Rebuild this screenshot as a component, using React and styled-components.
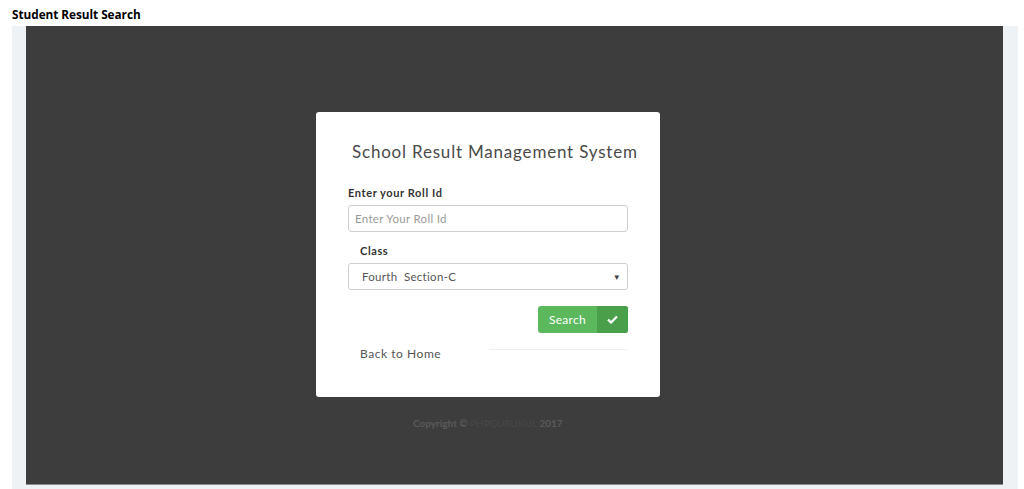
import React from "react";
import styled, { createGlobalStyle } from "styled-components";

const Global = createGlobalStyle`
  html, body {
    margin: 0;
    padding: 0;
    background: #ffffff;
  }
  body {
    font-family: "Open Sans", "Liberation Sans", sans-serif;
  }
`;

const PageTitle = styled.div`
  height: 26px;
  padding-left: 12px;
  box-sizing: border-box;
  padding-top: 6px;
  font-family: "Open Sans", sans-serif;
  font-weight: 700;
  font-size: 11.8px;
  line-height: 16px;
  color: #000;
  letter-spacing: -0.05px;
`;

const Frame = styled.div`
  margin: 0 6px 0 12px;
  padding: 0 15px 4px 14px;
  background: #eef2f5;
  height: 463px;
  box-sizing: border-box;
`;

const Stage = styled.div`
  background: #3d3d3d;
  height: 459px;
  border-bottom: 1px solid #8a8a8a;
  box-sizing: border-box;
  padding: 86px 0 0 290px;
  display: flex;
  flex-direction: column;
  align-items: flex-start;
`;

const Card = styled.div`
  width: 344px;
  height: 285px;
  background: #fff;
  border-radius: 3px;
  box-sizing: border-box;
  padding: 29px 32px 0 32px;
  font-family: "Lato", "Open Sans", sans-serif;
`;

const Heading = styled.h2`
  margin: 0 0 23px 4px;
  font-weight: 400;
  font-size: 17px;
  line-height: 22px;
  color: #4a4a4a;
  letter-spacing: 0.8px;
  white-space: nowrap;
`;

const Label = styled.label`
  display: block;
  font-weight: 700;
  font-size: 11px;
  line-height: 14px;
  color: #333;
  letter-spacing: 0.6px;
  margin: 0 0 5px ${(p) => (p.$indent ? "12px" : "0")};
`;

const Field = styled.div`
  width: 280px;
  height: 27px;
  border: 1px solid #cfcfcf;
  border-radius: 3px;
  box-sizing: border-box;
  display: flex;
  align-items: center;
  justify-content: space-between;
  padding: 0 6px 0 ${(p) => (p.$pad || 6)}px;
  font-size: 11.5px;
  letter-spacing: 0.3px;
  color: ${(p) => (p.$muted ? "#9a9a9a" : "#555")};
  margin-bottom: ${(p) => p.$gap || 0}px;
`;

const Arrow = styled.span`
  font-size: 8px;
  color: #444;
`;

const Actions = styled.div`
  width: 280px;
  display: flex;
  justify-content: flex-end;
  margin-bottom: 14px;
`;

const Button = styled.button`
  display: flex;
  height: 27px;
  padding: 0;
  border: none;
  border-radius: 3px;
  overflow: hidden;
  background: #5cb85c;
  cursor: pointer;
  font-family: "Lato", "Open Sans", sans-serif;
`;

const ButtonText = styled.span`
  width: 59px;
  display: flex;
  align-items: center;
  justify-content: center;
  color: #fff;
  font-size: 12px;
  letter-spacing: 0.3px;
`;

const ButtonIcon = styled.span`
  width: 31px;
  display: flex;
  align-items: center;
  justify-content: center;
  background: #4a9f4a;
`;

const Bottom = styled.div`
  width: 280px;
  display: flex;
  align-items: flex-start;
  justify-content: space-between;
`;

const BackLink = styled.a`
  margin-left: 12px;
  font-size: 12px;
  line-height: 14px;
  letter-spacing: 0.55px;
  color: #555;
  text-decoration: none;
`;

const Rule = styled.div`
  margin-top: 2px;
  width: 139px;
  height: 1px;
  background: #f0f0f0;
`;

const Copyright = styled.div`
  align-self: flex-start;
  margin: 20px 0 0 97px;
  font-family: "Lato", sans-serif;
  font-size: 10px;
  font-weight: 700;
  color: #5a5a5a;
`;

const Brand = styled.span`
  color: #484848;
  font-weight: 400;
`;

export default function App() {
  return (
    <>
      <Global />
      <PageTitle>Student Result Search</PageTitle>
      <Frame>
        <Stage>
          <Card>
            <Heading>School Result Management System</Heading>
            <Label>Enter your Roll Id</Label>
            <Field $muted $gap={12}>Enter Your Roll Id</Field>
            <Label $indent>Class</Label>
            <Field $pad={13} $gap={16}>
              <span>Fourth&nbsp; Section-C</span>
              <Arrow>▼</Arrow>
            </Field>
            <Actions>
              <Button>
                <ButtonText>Search</ButtonText>
                <ButtonIcon>
                  <svg width="11" height="9" viewBox="0 0 11 9">
                    <path d="M1 4.6 L4 7.5 L10 1.5" stroke="#fff" strokeWidth="2.2" fill="none" />
                  </svg>
                </ButtonIcon>
              </Button>
            </Actions>
            <Bottom>
              <BackLink href="#">Back to Home</BackLink>
              <Rule />
            </Bottom>
          </Card>
          <Copyright>
            Copyright © <Brand>PHPGURUKUL</Brand> 2017
          </Copyright>
        </Stage>
      </Frame>
    </>
  );
}
